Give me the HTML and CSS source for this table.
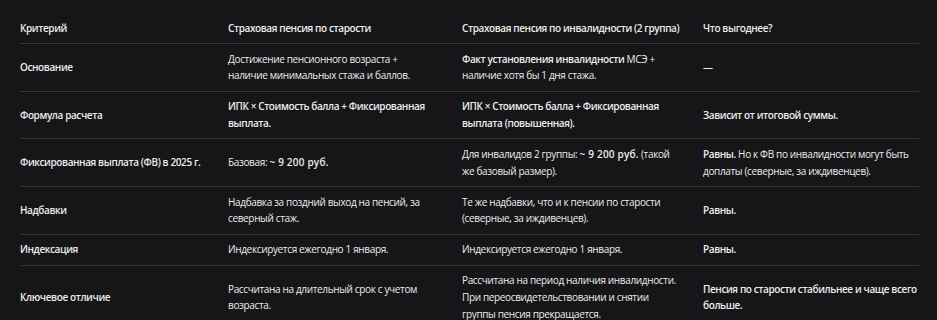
FILE: index.html
```html
<!DOCTYPE html>
<html lang="ru">
<head>
<meta charset="utf-8">
<title>Сравнение пенсий</title>
<link rel="stylesheet" href="styles.css">
</head>
<body>
<div class="wrap">
<table class="cmp">
  <colgroup>
    <col class="c1"><col class="c2"><col class="c3"><col class="c4">
  </colgroup>
  <thead>
    <tr>
      <th>Критерий</th>
      <th>Страховая пенсия по старости</th>
      <th>Страховая пенсия по инвалидности (2 группа)</th>
      <th>Что выгоднее?</th>
    </tr>
  </thead>
  <tbody>
    <tr>
      <td><b>Основание</b></td>
      <td>Достижение пенсионного возраста + наличие минимальных стажа и баллов.</td>
      <td><b>Факт установления инвалидности</b> МСЭ + наличие хотя бы 1 дня стажа.</td>
      <td>—</td>
    </tr>
    <tr>
      <td><b>Формула расчета</b></td>
      <td><b>ИПК × Стоимость балла + Фиксированная выплата.</b></td>
      <td><b>ИПК × Стоимость балла + Фиксированная выплата (повышенная).</b></td>
      <td><b>Зависит от итоговой суммы.</b></td>
    </tr>
    <tr>
      <td><b>Фиксированная выплата (ФВ) в 2025 г.</b></td>
      <td>Базовая: <b class="num">~ 9 200 руб.</b></td>
      <td>Для инвалидов 2 группы: <b class="num">~ 9 200 руб.</b> (такой же базовый размер).</td>
      <td><b>Равны.</b> Но к ФВ по инвалидности могут быть доплаты (северные, за иждивенцев).</td>
    </tr>
    <tr>
      <td><b>Надбавки</b></td>
      <td>Надбавка за поздний выход на пенсий, за северный стаж.</td>
      <td>Те же надбавки, что и к пенсии по старости (северные, за иждивенцев).</td>
      <td><b>Равны.</b></td>
    </tr>
    <tr>
      <td><b>Индексация</b></td>
      <td>Индексируется ежегодно 1 января.</td>
      <td>Индексируется ежегодно 1 января.</td>
      <td><b>Равны.</b></td>
    </tr>
    <tr>
      <td><b>Ключевое отличие</b></td>
      <td>Рассчитана на длительный срок с учетом возраста.</td>
      <td>Рассчитана на период наличия инвалидности. При переосвидетельствовании и снятии группы пенсия прекращается.</td>
      <td><b>Пенсия по старости стабильнее и чаще всего больше.</b></td>
    </tr>
  </tbody>
</table>
</div>
</body>
</html>
```

FILE: styles.css
```css
html, body {
  margin: 0;
  background: #161618;
}
body {
  color: #ececec;
  font-family: "Open Sans", "Noto Sans", sans-serif;
  font-size: 10px;
  line-height: 16.67px;
  letter-spacing: -0.35px;
}
.wrap {
  padding: 13px 18px 0 20px;
}
.cmp {
  width: 899px;
  border-collapse: collapse;
  table-layout: fixed;
}
.c1 { width: 208px; }
.c2 { width: 234px; }
.c3 { width: 241px; }
.c4 { width: 216px; }
.cmp th,
.cmp td {
  padding: 6.67px 0;
  text-align: left;
  vertical-align: middle;
}
.cmp th {
  white-space: nowrap;
}
.cmp th:nth-child(1),
.cmp td:nth-child(1) { padding-right: 16px; }
.cmp th:nth-child(2),
.cmp td:nth-child(2) { padding-right: 26px; }
.cmp th:nth-child(3),
.cmp td:nth-child(3) { padding-right: 24px; }
.cmp th,
.cmp b {
  font-weight: 600;
  letter-spacing: -0.4px;
}
.cmp .num {
  letter-spacing: 0.2px;
}
.cmp tr {
  border-bottom: 1px solid #36363a;
}
.cmp tbody tr:last-child {
  border-bottom: none;
}
```
